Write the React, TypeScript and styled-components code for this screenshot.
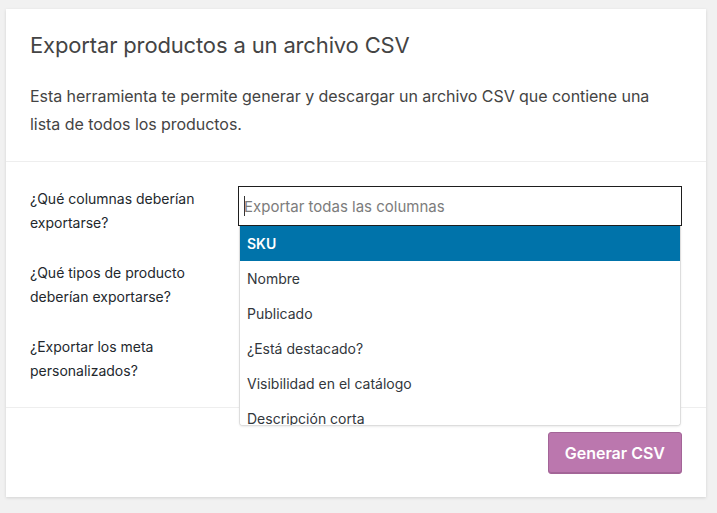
import React from "react";
import styled, { createGlobalStyle } from "styled-components";

const Global = createGlobalStyle`
  html, body { margin: 0; padding: 0; background: #f1f1f1; }
  body { font-family: Inter, "Noto Sans", sans-serif; -webkit-font-smoothing: antialiased; }
`;

const Page = styled.div`
  padding: 9px 11px 16px 6px;
`;

const Card = styled.div`
  width: 700px;
  background: #fff;
  box-shadow: 0 1px 3px rgba(0, 0, 0, 0.13);
`;

const Header = styled.header`
  padding: 24px 24px 23px;
  border-bottom: 1px solid #eee;
`;

const Title = styled.h2`
  margin: 0;
  font-size: 22px;
  line-height: 24px;
  font-weight: 400;
  color: #444;
  letter-spacing: -0.15px;
`;

const Intro = styled.p`
  margin: 25px 0 0;
  font-size: 16px;
  line-height: 28px;
  color: #444;
  letter-spacing: -0.05px;
`;

const Content = styled.section`
  padding: 25px 24px 24px;
  border-bottom: 1px solid #eee;
  display: flex;
  flex-direction: column;
  gap: 26px;
`;

const Row = styled.div`
  display: grid;
  grid-template-columns: 208px 1fr;
  align-items: start;
`;

const Label = styled.div`
  font-size: 14px;
  line-height: 24px;
  color: #23282d;
  height: 48px;
`;

const Field = styled.div`
  position: relative;
  width: 444px;
  margin-top: -1px;
`;

const Input = styled.div`
  box-sizing: border-box;
  height: 40px;
  border: 1px solid #1e1e1e;
  display: flex;
  align-items: center;
  padding: 0 5px;
  font-size: 15px;
  color: #7c7c7c;
  background: #fff;
`;

const Caret = styled.span`
  display: inline-block;
  width: 1px;
  height: 20px;
  background: #333;
  margin-right: -1px;
`;

const Dropdown = styled.ul`
  position: absolute;
  top: 40px;
  left: 1px;
  right: 1px;
  height: 200px;
  margin: 0;
  padding: 0;
  list-style: none;
  overflow: hidden;
  background: #fff;
  border: 1px solid #ddd;
  border-top: none;
  border-radius: 0 0 4px 4px;
  box-sizing: border-box;
  box-shadow: 0 1px 2px rgba(0, 0, 0, 0.08);
  z-index: 2;
`;

const Option = styled.li<{ $active?: boolean }>`
  height: 35px;
  display: flex;
  align-items: center;
  padding: 0 7px;
  font-size: 14px;
  color: ${(p) => (p.$active ? "#fff" : "#32373c")};
  background: ${(p) => (p.$active ? "#0073aa" : "#fff")};
  font-weight: ${(p) => (p.$active ? 600 : 400)};
  white-space: nowrap;
  flex-shrink: 0;
`;

const Footer = styled.footer`
  padding: 24px 24px 23px;
  display: flex;
  justify-content: flex-end;
`;

const Button = styled.button`
  box-sizing: border-box;
  height: 42px;
  padding: 0 16px;
  border: 1px solid #a36597;
  border-radius: 3px;
  background: #bb77ae;
  box-shadow: inset 0 -1px 0 #a36597;
  color: #fff;
  font-family: inherit;
  font-size: 16px;
  font-weight: 600;
  cursor: pointer;
`;

const options = [
  "SKU",
  "Nombre",
  "Publicado",
  "¿Está destacado?",
  "Visibilidad en el catálogo",
  "Descripción corta",
];

export default function App() {
  return (
    <>
      <Global />
      <Page>
        <Card>
          <Header>
            <Title>Exportar productos a un archivo CSV</Title>
            <Intro>
              Esta herramienta te permite generar y descargar un archivo CSV que contiene una lista de
              todos los productos.
            </Intro>
          </Header>
          <Content>
            <Row>
              <Label>
                ¿Qué columnas deberían
                <br />
                exportarse?
              </Label>
              <Field>
                <Input>
                  <Caret />
                  Exportar todas las columnas
                </Input>
                <Dropdown>
                  {options.map((o, i) => (
                    <Option key={o} $active={i === 0}>
                      {o}
                    </Option>
                  ))}
                </Dropdown>
              </Field>
            </Row>
            <Row>
              <Label>
                ¿Qué tipos de producto
                <br />
                deberían exportarse?
              </Label>
            </Row>
            <Row>
              <Label>
                ¿Exportar los meta
                <br />
                personalizados?
              </Label>
            </Row>
          </Content>
          <Footer>
            <Button>Generar CSV</Button>
          </Footer>
        </Card>
      </Page>
    </>
  );
}
